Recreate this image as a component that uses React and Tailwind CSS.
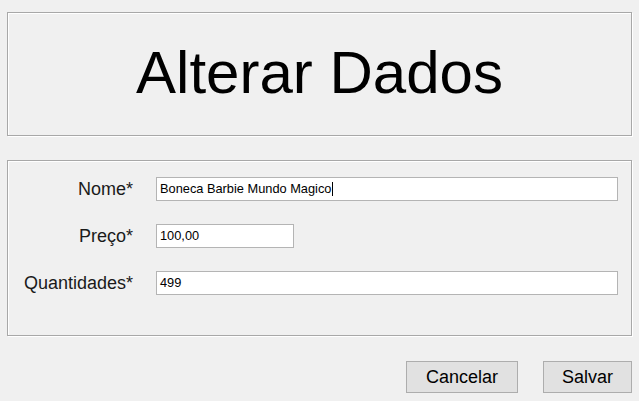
import React from "react";

const font = { fontFamily: '"Liberation Sans", Arial, sans-serif' };

function Field({ label, value, narrow, caret }) {
  return (
    <>
      <div className="text-right text-[18px] leading-[24px] text-[#1a1a1a]">{label}</div>
      <div className={`h-[24px] border border-[#b4b4b4] bg-white flex items-center pl-[3px] text-[12.8px] text-black ${narrow ? "w-[138px]" : "w-full"}`}>
        <span className="whitespace-nowrap">{value}</span>
        {caret && <span className="ml-[1px] w-[1px] h-[14px] bg-black" />}
      </div>
    </>
  );
}

export default function App() {
  return (
    <div style={font} className="w-[639px] h-[401px] bg-[#f0f0f0] pt-[12px] pl-[7px] pr-[7px] flex flex-col">
      <div className="h-[124px] border border-[#a8a8a8] shadow-[inset_1px_1px_0_#ffffff,1px_1px_0_#ffffff] flex items-center justify-center">
        <span className="text-[60px] leading-none text-black -mt-[3px]">Alterar Dados</span>
      </div>
      <div className="mt-[24px] h-[176px] border border-[#a8a8a8] shadow-[inset_1px_1px_0_#ffffff,1px_1px_0_#ffffff] pt-[16px] pr-[13px]">
        <div className="grid grid-cols-[125px_1fr] gap-x-[23px] gap-y-[23px] items-center">
          <Field label="Nome*" value="Boneca Barbie Mundo Magico" caret />
          <Field label="Preço*" value="100,00" narrow />
          <Field label="Quantidades*" value="499" />
        </div>
      </div>
      <div className="mt-[25px] flex justify-end gap-[25px]">
        <button className="w-[112px] h-[32px] border border-[#adadad] bg-[#e1e1e1] text-[18px] text-black leading-none">Cancelar</button>
        <button className="w-[89px] h-[32px] border border-[#adadad] bg-[#e1e1e1] text-[18px] text-black leading-none">Salvar</button>
      </div>
    </div>
  );
}
